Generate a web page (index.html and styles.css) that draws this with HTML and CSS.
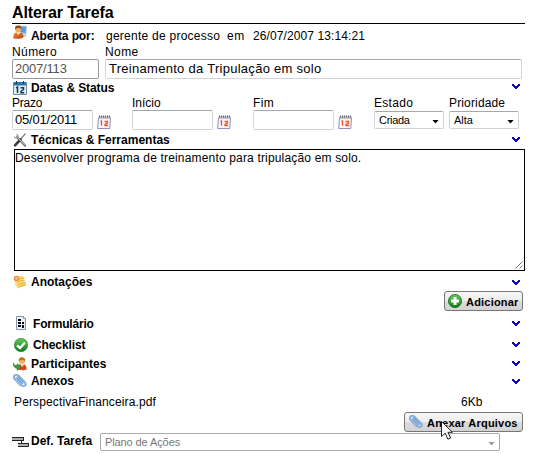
FILE: index.html
```html
<!DOCTYPE html>
<html lang="pt-BR">
<head>
<meta charset="utf-8">
<title>Alterar Tarefa</title>
<link rel="stylesheet" href="styles.css">
</head>
<body>
<svg class="defs" width="0" height="0">
  <defs>
    <linearGradient id="green" x1="0" y1="0" x2="0" y2="1"><stop offset="0" stop-color="#67c95c"/><stop offset="1" stop-color="#087c16"/></linearGradient>
    <linearGradient id="shirt" x1="0" y1="0" x2="1" y2="1"><stop offset="0" stop-color="#f69a42"/><stop offset="1" stop-color="#ba3511"/></linearGradient>
    <symbol id="chevron" viewBox="0 0 8 5"><path d="M0 0h2v1h1v1h2V1h1V0h2v2H7v1H6v1H5v1H3V4H2V3H1V2H0z" fill="#1208c0"/></symbol>
    <symbol id="date" viewBox="0 0 14 14"><path d="M1.500 2.500h12l-.700 11H.700z" fill="#f6f5fb" stroke="#8e92bd"/><path d="M2 1h11v3H1.500z" fill="#c3c3ce"/><path d="M2 1.500h11" stroke="#66676f" stroke-width="2" stroke-dasharray="1 1"/><path d="M3.500 6.800l1-.800v4.800M7.500 6.500h3v1.500L8 9.400v1.100h3.200" fill="none" stroke="#ed5722" stroke-width="1.300"/></symbol>
    <symbol id="clip" viewBox="0 0 14 14"><path d="M3.200 5.200l5.600 6.200c2 1.800 5-.400 3.300-2.800L5.400 1.700C3-.500-.400 2.300 1.400 4.700l5.500 6M4.500 3.500l5 5.400" fill="none" stroke="#5c90cb" stroke-width="1.900" stroke-linecap="round"/><path d="M3.200 5.200l5.600 6.200c2 1.800 5-.400 3.300-2.800L5.400 1.700C3-.500-.400 2.300 1.400 4.700l5.500 6M4.500 3.500l5 5.400" fill="none" stroke="#c4e1f8" stroke-width=".8" stroke-linecap="round"/></symbol>
  </defs>
</svg>
<main class="task">
  <h1><span class="t-title">Alterar Tarefa</span></h1>
  <div class="opened">
    <svg class="icon" viewBox="0 0 14 14"><path d="M6 .5l8 .6-.7 8.400-6.300-.7z" fill="#9bbbe0"/><path d="M7.500 1.800l5.200.4-.5 5.200-4.600-.5z" fill="#589bdc"/><path d="M9 10l4 .3v1L9 11z" fill="#91a4b9"/><path d="M.3 13.500C0 8.700 2 7 5 7s5.800 2 5.500 5.200c-2 1.800-7 2-10.200 1.300z" fill="url(#shirt)"/><path d="M3 7l2.300 3L8 7z" fill="#ffe2a7"/><circle cx="5" cy="4.200" r="3" fill="#f0ad61"/><path d="M2 4C1.700.7 4 0 6 .6c2 .5 2.300 2 1.800 3L5 2.800z" fill="#944711"/></svg>
    <b class="t-opened">Aberta por:</b><span class="t-who">gerente de processo</span><span class="t-em">em</span><span class="t-when">26/07/2007 13:14:21</span>
  </div>
  <div class="names">
    <label class="number"><span class="t-numero">Número</span><span class="field">2007/113</span></label>
    <label class="name"><span class="t-nome">Nome</span><span class="field">Treinamento da Tripulação em solo</span></label>
  </div>
  <div class="head head-dates">
    <svg class="icon" viewBox="0 0 14 14"><path d="M.5 1.500h13v12H.5z" fill="#e3eff7" stroke="#6d8ca2"/><path d="M1 1h12v3.500H1z" fill="#277aaf"/><path d="M3.500 0v3M10.500 0v3" stroke="#233f55"/><path d="M3 7l1.500-1v6M7.500 6.800h3v1.700L8 10.500v1.200h3.200" fill="none" stroke="#173650" stroke-width="1.500"/></svg>
    <b class="t-dates">Datas &amp; Status</b><svg class="chev"><use href="#chevron"/></svg>
  </div>
  <div class="dates">
    <label class="date"><span class="t-prazo">Prazo</span><span class="line"><span class="field">05/01/2011</span><svg class="cal"><use href="#date"/></svg></span></label>
    <label class="date"><span class="t-inicio">Início</span><span class="line"><span class="field"></span><svg class="cal"><use href="#date"/></svg></span></label>
    <label class="date"><span class="t-fim">Fim</span><span class="line"><span class="field"></span><svg class="cal"><use href="#date"/></svg></span></label>
    <label class="choice"><span class="t-estado">Estado</span><span class="select"><span class="t-criada">Criada</span><i class="arrow"></i></span></label>
    <label class="choice"><span class="t-prio">Prioridade</span><span class="select"><span class="t-alta">Alta</span><i class="arrow"></i></span></label>
  </div>
  <div class="head head-tools">
    <svg class="icon" viewBox="0 0 14 14"><path d="M12.500.5L7.800 6" stroke="#888" stroke-width="1.300"/><path d="M7.500 6.500L2 12.300" stroke="#3c3c3c" stroke-width="2.600" stroke-linecap="round"/><path d="M4 4l8 8.500" stroke="#666" stroke-width="2.200" stroke-linecap="round"/><path d="M3.500 3.200l8.500 9" stroke="#d2d2d2" stroke-width=".8"/><path d="M1 3c0 3 3.500 3.500 4.500 1.500S4.300 1 3 1l1.200 2L3 4.500z" fill="#999"/></svg>
    <b class="t-tools">Técnicas &amp; Ferramentas</b><svg class="chev"><use href="#chevron"/></svg>
  </div>
  <div class="memo"><span class="t-memo">Desenvolver programa de treinamento para tripulação em solo.</span>
    <svg class="grip" viewBox="0 0 8 8"><path d="M.5 7.500l7-7M4.500 7.500l3-3" stroke="#777"/></svg>
  </div>
  <div class="head head-notes">
    <svg class="icon" viewBox="0 0 14 14"><path d="M1 2l9-1.500 3.500 10L5 13.500 2.500 11z" fill="#fcdc80"/><path d="M6 4l5-1M4 7l7.500-2M4.500 9.500l8-2M5.500 11.500l7-2" stroke="#dda33b" stroke-width=".8"/><circle cx="3.500" cy="3.500" r="2.700" fill="#f38a3c"/><circle cx="3.500" cy="3.500" r="1.200" fill="#ffd19a"/></svg>
    <b class="t-notes">Anotações</b><svg class="chev"><use href="#chevron"/></svg>
  </div>
  <div class="actions">
    <span class="button add"><svg class="icon plus" viewBox="0 0 14 14"><circle cx="7" cy="7" r="6.600" fill="url(#green)" stroke="#16751d" stroke-width=".8"/><path d="M5.500 3h3v2.500H11v3H8.500V11h-3V8.500H3v-3h2.500z" fill="#fff"/></svg><b class="t-add">Adicionar</b></span>
  </div>
  <div class="head head-form">
    <svg class="icon" viewBox="0 0 14 14"><path d="M1.500.500h7l2 2v11h-9z" fill="#eef2f8" stroke="#8794aa"/><path d="M8.500.500v2h2" fill="#fff" stroke="#8794aa"/><path d="M3 3h3v2H3zM3 6h3v2H3zM7 6h2v2H7zM3 9h3v2H3zM7 9h2v3H7z" fill="#080b10"/></svg>
    <b class="t-form">Formulário</b><svg class="chev"><use href="#chevron"/></svg>
  </div>
  <div class="head head-check">
    <svg class="icon" viewBox="0 0 14 14"><circle cx="7" cy="7" r="6.700" fill="url(#green)" stroke="#25812b" stroke-width=".6"/><path d="M3 7.300l3 2.700 5-5.500" fill="none" stroke="#fff" stroke-width="2.400"/></svg>
    <b class="t-check">Checklist</b><svg class="chev"><use href="#chevron"/></svg>
  </div>
  <div class="head head-people">
    <svg class="icon" viewBox="0 0 14 14"><path d="M4 12c0-4 2-5 5-5s5 2 4.500 5.500c-2 1-7 1-9.500-.5z" fill="#cf4925"/><path d="M7 7l2 3 2.500-3z" fill="#f9e5b7"/><circle cx="9" cy="4" r="3" fill="#efb45f"/><path d="M5.800 4C5.500.7 8 0 10 .5c2 .5 2.500 2 2 3.200L9 2.800z" fill="#b9721b"/><path d="M0 5.500c1 2.500 2.500 3 4 3V6.700L8.300 10 4 13.500v-2C1.500 11 0 9 0 5.500z" fill="#3c9c38" stroke="#237a27" stroke-width=".5"/></svg>
    <b class="t-people">Participantes</b><svg class="chev"><use href="#chevron"/></svg>
  </div>
  <div class="head head-files">
    <svg class="icon"><use href="#clip"/></svg>
    <b class="t-files">Anexos</b><svg class="chev"><use href="#chevron"/></svg>
  </div>
  <div class="file"><span class="t-file">PerspectivaFinanceira.pdf</span><span class="t-size">6Kb</span></div>
  <div class="actions attach-row">
    <span class="button attach"><svg class="icon"><use href="#clip"/></svg><b class="t-attach">Anexar Arquivos</b>
      <svg class="pointer" viewBox="0 0 12 19"><path d="M.5.500v15l3.700-3.300 2.700 6 2.700-1.200-2.700-5.700h4.500z" fill="#fff" stroke="#222"/></svg>
    </span>
  </div>
  <div class="definition">
    <svg class="flow" viewBox="0 0 17 12"><path d="M0 1h12v4H0zM6 7h11v4H6z" fill="#b0b0b0"/><path d="M0 1.500h12M0 4.500h12M6 7.500h10M6 10.500h10.500V7M11.500 1v3" fill="none" stroke="#222"/><path d="M9.500 5v2" stroke="#222"/></svg>
    <b class="t-def">Def. Tarefa</b>
    <span class="select disabled"><span class="t-plan">Plano de Ações</span><i class="arrow"></i></span>
  </div>
</main>
</body>
</html>
```
FILE: styles.css
```css
* { box-sizing: border-box; }
body { margin: 0; background: #fff; color: #000; font: 12px/14px "Liberation Sans", Arial, sans-serif; }
.defs { display: block; height: 0; }
.task { width: 536px; height: 462px; padding: 0 11px 0 12px; overflow: hidden; white-space: nowrap; }
h1 { margin: 0; width: 513px; height: 24px; padding-top: 3px; border-bottom: 1px solid #000; font-size: 16px; line-height: 20px; letter-spacing: -.1px; }
svg { display: block; flex: none; }
.icon { width: 14px; height: 14px; }
.opened { display: flex; height: 21px; padding: 1px 0 0 1px; }
.opened b { width: 75px; margin-left: 4px; padding-top: 4px; letter-spacing: -.1px; }
.opened span { padding-top: 4px; }
.t-who { width: 121px; letter-spacing: .25px; }
.t-em { width: 26px; letter-spacing: .5px; }
.t-when { letter-spacing: .1px; }
.t-numero, .t-nome, .t-fim { letter-spacing: .4px; }
.t-estado { letter-spacing: .3px; }
.t-prio { letter-spacing: .15px; }
.t-prazo { letter-spacing: -.2px; }
.names { display: flex; gap: 6px; height: 34px; }
.names label { display: flex; flex-direction: column; }
.names .number { width: 87px; }
.names .name { width: 417px; }
.field { display: block; width: 100%; height: 20px; padding: 1px 2px 0; border: 1px solid #d0d4da; border-top-color: #a5a8ad; border-radius: 2px; font-size: 13px; line-height: 16px; letter-spacing: -.2px; }
.name .field { padding-left: 3px; letter-spacing: .28px; }
.number .field { color: #555; border-color: #999; }
.head { display: flex; align-items: center; padding: 0 5px 0 1px; height: 16px; }
.head b { margin-left: 4px; }
.chev { width: 8px; height: 5px; margin-left: auto; }
.head-dates { height: 17px; }
.head-dates .chev { margin-bottom: 2px; }
.t-dates, .t-files, .t-check { letter-spacing: -.1px; }
.t-form { letter-spacing: -.2px; }
.dates { display: flex; height: 35px; }
.dates label { display: flex; flex-direction: column; }
.date { width: 121px; }
.date:first-child { width: 120px; }
.line { display: flex; }
.line .field { width: 81px; }
.cal { width: 14px; height: 14px; margin: 5px 0 0 4px; }
.choice { width: 75px; }
.choice .select { margin-top: 1px; }
.select { display: flex; align-items: center; justify-content: space-between; width: 70px; height: 18px; padding: 0 4px; border: 1px solid #d0d4da; border-top-color: #a5a8ad; border-radius: 2px; font-size: 11px; }
.t-criada { letter-spacing: -.3px; }
.arrow { width: 7px; height: 4px; margin-top: 3px; background: #000; clip-path: polygon(0 0, 100% 0, 50% 100%); }
.head-tools { height: 18px; padding-bottom: 1px; }
.memo { position: relative; width: 511px; height: 122px; margin-left: 2px; padding: 1px 0; border: 1px solid #000; }
.t-memo { letter-spacing: .17px; }
.grip { position: absolute; right: 1px; bottom: 1px; width: 8px; height: 8px; }
.head-notes { height: 20px; padding-top: 2px; }
.actions { display: flex; justify-content: flex-end; height: 22px; padding-right: 2px; }
.button { position: relative; display: flex; align-items: center; height: 20px; padding-left: 4px; border: 1px solid #777; border-radius: 3px; background: linear-gradient(#f6f6f6 0%, #ececec 48%, #dcdcdc 52%, #d3d3d3 100%); font-size: 11px; }
.add { width: 79px; padding-left: 3px; }
.button b { margin-left: 4px; padding-top: 2px; letter-spacing: .2px; }
.head-form { height: 21px; padding-left: 3px; }
.head-form .icon { margin-bottom: 2px; }
.head-check { height: 21px; padding-left: 2px; }
.head-check b { margin-left: 5px; }
.head-people { height: 17px; }
.head-files { height: 18px; }
.file { display: flex; height: 22px; padding: 5px 0 0 2px; }
.t-file { width: 447px; letter-spacing: .13px; }
.attach { width: 119px; }
.attach-row { height: 21px; }
.pointer { position: absolute; left: 36px; top: 8px; width: 12px; height: 19px; z-index: 2; }
.definition { display: flex; height: 20px; }
.flow { width: 17px; height: 12px; margin-top: 3px; }
.definition b { width: 69px; margin: 1px 0 0 2px; }
.disabled { width: 400px; border-color: #aaa; color: #777; }
.t-plan { letter-spacing: -.1px; }
.disabled .arrow { background: #999; }
```
